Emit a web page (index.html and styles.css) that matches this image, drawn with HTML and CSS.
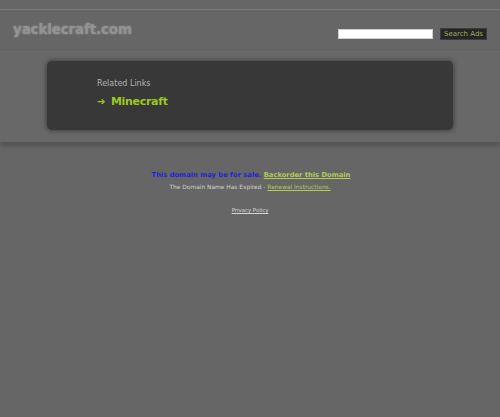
FILE: index.html
```html
<!DOCTYPE html>
<html>
<head>
<meta charset="utf-8">
<title>yacklecraft.com</title>
<link rel="stylesheet" href="styles.css">
</head>
<body>
<div class="top">
  <div class="header">
    <div class="logo">yacklecraft.com</div>
    <form class="search">
      <input class="search-input" type="text">
      <button class="search-btn" type="button">Search Ads</button>
    </form>
  </div>
  <div class="content">
    <div class="panel">
      <div class="related-title">Related Links</div>
      <a class="related-link" href="#"><span class="arrow">➔</span> Minecraft</a>
    </div>
  </div>
</div>
<div class="footer">
  <div class="sale"><span class="sale-text">This domain may be for sale.</span> <a class="green" href="#">Backorder this Domain</a></div>
  <div class="expired">The Domain Name Has Expired - <a class="green" href="#">Renewal Instructions.</a></div>
  <div class="privacy"><a href="#">Privacy Policy</a></div>
</div>
</body>
</html>
```

FILE: styles.css
```css
html, body {
  margin: 0;
  padding: 0;
  background: #666666;
  font-family: "DejaVu Sans", Verdana, sans-serif;
}
.top {
  margin-top: 9px;
  border-top: 1px solid #7a7a7a;
  background: #686868;
  box-shadow: 0 4px 4px rgba(0,0,0,0.18);
  padding-bottom: 12px;
}
.header {
  display: flex;
  justify-content: space-between;
  align-items: flex-start;
  height: 39px;
  border-bottom: 1px solid #606060;
  background: #666666;
}
.logo {
  margin: 12px 0 0 13px;
  font-size: 13.4px;
  font-weight: bold;
  color: #939393;
  letter-spacing: -0.1px;
  text-shadow: 0 0 2px rgba(160,160,160,0.8);
}
.search {
  display: flex;
  align-items: center;
  gap: 7px;
  margin: 18px 13px 0 0;
}
.search-input {
  width: 95px;
  height: 10px;
  box-sizing: border-box;
  border: 1px solid #cfcfcf;
  background: #ffffff;
  padding: 0;
}
.search-btn {
  width: 47px;
  height: 12px;
  box-sizing: border-box;
  border: 1px solid #3c3c3c;
  background: #252525;
  color: #9bab5a;
  font-family: "DejaVu Sans", Verdana, sans-serif;
  font-size: 7px;
  padding: 0;
  line-height: 10px;
}
.content {
  padding: 11px 47px 0 47px;
}
.panel {
  background: #383838;
  border-radius: 5px;
  height: 69px;
  box-sizing: border-box;
  padding: 18px 50px 0 50px;
  box-shadow: 0 0 4px 1px rgba(40,40,40,0.6);
}
.related-title {
  font-size: 8px;
  color: #b4b4b4;
  line-height: 10px;
}
.related-link {
  display: block;
  margin-top: 6px;
  font-size: 11px;
  font-weight: bold;
  color: #9ec81e;
  text-decoration: none;
  line-height: 14px;
  letter-spacing: -0.3px;
}
.arrow {
  font-weight: normal;
  font-size: 10px;
  letter-spacing: 0;
  margin-right: 2px;
}
.footer {
  padding-top: 28px;
  text-align: center;
}
.sale {
  font-size: 6.75px;
  font-weight: bold;
  line-height: 10px;
  margin-left: 2px;
}
.sale-text {
  color: #2222dd;
}
.green {
  color: #b3cc55;
  text-decoration: underline;
}
.expired {
  font-size: 5.9px;
  color: #d0d0d0;
  line-height: 8px;
  margin-top: 3px;
}
.privacy {
  margin-top: 15px;
  font-size: 5.4px;
  line-height: 8px;
}
.privacy a {
  color: #d6d6d6;
  text-decoration: underline;
}
```
